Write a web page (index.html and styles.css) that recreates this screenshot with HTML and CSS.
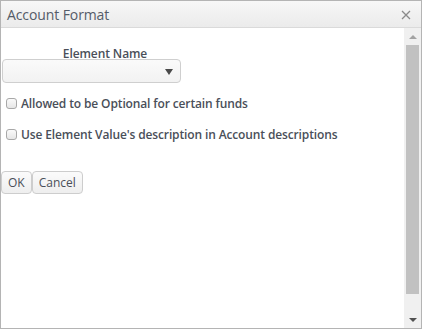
FILE: index.html
```html
<!DOCTYPE html>
<html>
<head>
<meta charset="utf-8">
<link rel="stylesheet" href="styles.css">
</head>
<body>
<div class="dialog">
  <div class="titlebar">
    <span class="title">Account Format</span>
    <svg class="close" width="10" height="10" viewBox="0 0 10 10"><path d="M1 1L9 9M9 1L1 9" stroke="#8a8a8a" stroke-width="1.3" fill="none"/></svg>
  </div>
  <div class="body">
    <div class="content">
      <div class="field-label">Element Name</div>
      <div class="select"><span class="caret"></span></div>
      <label class="check first"><span class="box"></span>Allowed to be Optional for certain funds</label>
      <label class="check second"><span class="box"></span>Use Element Value's description in Account descriptions</label>
      <div class="buttons">
        <button class="btn">OK</button><button class="btn">Cancel</button>
      </div>
    </div>
    <div class="scrollbar">
      <span class="arrow up"></span>
      <div class="thumb"></div>
      <span class="arrow down"></span>
    </div>
  </div>
</div>
</body>
</html>
```
FILE: styles.css
```css
html, body { margin: 0; padding: 0; }
body {
  width: 422px;
  height: 329px;
  font-family: "Open Sans", "DejaVu Sans", sans-serif;
  background: #fff;
}
.dialog {
  box-sizing: border-box;
  width: 422px;
  height: 329px;
  border: 1px solid #b4b4b4;
  display: flex;
  flex-direction: column;
}
.titlebar {
  height: 26px;
  flex: 0 0 26px;
  background: linear-gradient(#f7f7f7, #ebebeb);
  border-bottom: 1px solid #dadada;
  display: flex;
  align-items: center;
  justify-content: space-between;
  padding: 0 10px 0 6px;
}
.title {
  font-size: 14px;
  color: #555c68;
  letter-spacing: -0.1px;
}
.close {
  display: block;
  margin-top: 1px;
}
.body {
  flex: 1;
  display: flex;
  min-height: 0;
}
.content {
  flex: 1;
  padding-top: 17px;
  padding-left: 1px;
}
.field-label {
  width: 206px;
  text-align: center;
  font-size: 12px;
  font-weight: 600;
  color: #4a4f59;
  line-height: 17px;
  letter-spacing: -0.1px;
}
.select {
  box-sizing: border-box;
  width: 179px;
  height: 24px;
  margin-top: -3px;
  border: 1px solid #cfcfcf;
  border-radius: 4px;
  background: linear-gradient(#fafafa, #f2f2f2);
  position: relative;
}
.caret {
  position: absolute;
  right: 7px;
  top: 9px;
  width: 0;
  height: 0;
  border-left: 4px solid transparent;
  border-right: 4px solid transparent;
  border-top: 6px solid #4a4a4a;
}
.check {
  display: flex;
  align-items: center;
  font-size: 12px;
  font-weight: 600;
  color: #4a4f59;
  margin-left: 4px;
  height: 17px;
  letter-spacing: -0.13px;
}
.check.first { margin-top: 12px; }
.check.second { margin-top: 14px; }
.box {
  box-sizing: border-box;
  width: 11px;
  height: 11px;
  border: 1px solid #a8a8a8;
  border-radius: 3px;
  background: linear-gradient(#fafafa, #e6e6e6);
  margin-right: 4px;
}
.buttons {
  display: flex;
  margin-top: 28px;
  margin-left: -1px;
}
.btn {
  box-sizing: border-box;
  height: 23px;
  font-family: "Open Sans", "DejaVu Sans", sans-serif;
  font-size: 12px;
  color: #4a4f59;
  border: 1px solid #cdcdcd;
  border-radius: 4px;
  background: linear-gradient(#fbfbfb, #eeeeee);
  padding: 0 6px;
  margin: 0;
}
.scrollbar {
  width: 17px;
  background: #f0f0f0;
  display: flex;
  flex-direction: column;
  align-items: center;
}
.arrow {
  width: 0;
  height: 0;
  border-left: 4px solid transparent;
  border-right: 4px solid transparent;
}
.arrow.up {
  border-bottom: 4px solid #a3a3a3;
  margin-top: 7px;
  margin-bottom: 6px;
}
.arrow.down {
  border-top: 4px solid #505050;
  margin-top: 24px;
}
.thumb {
  width: 13px;
  height: 249px;
  background: #c1c1c1;
}
```
